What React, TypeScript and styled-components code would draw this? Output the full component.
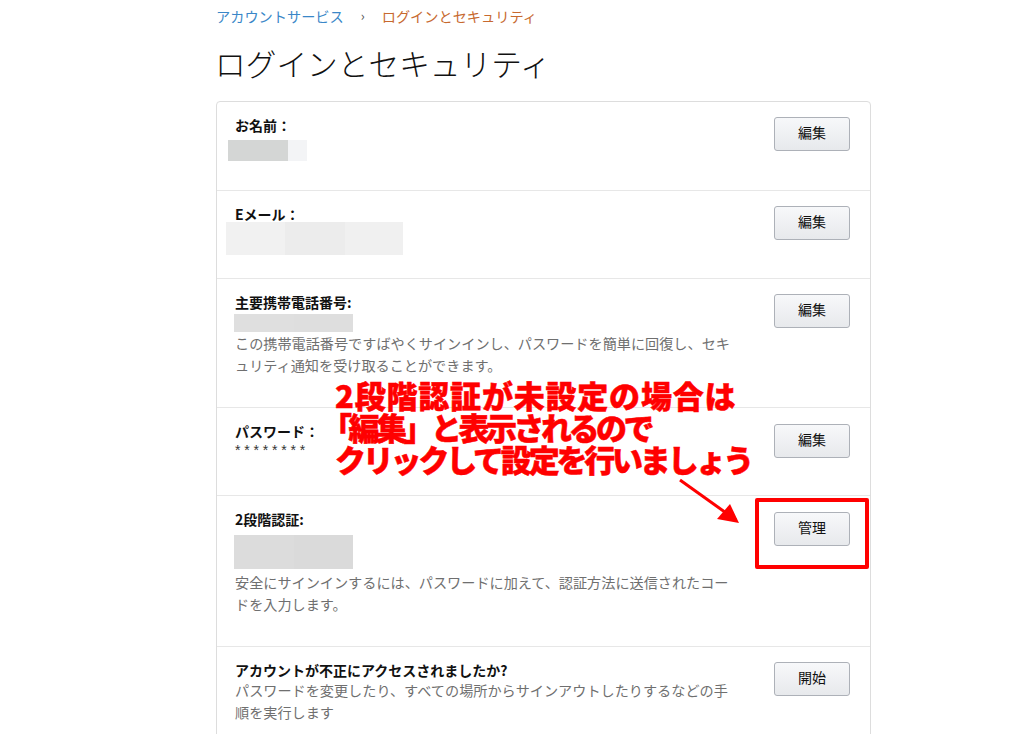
import React from 'react'
import styled, { createGlobalStyle } from 'styled-components'

const GlobalStyle = createGlobalStyle`
  html, body {
    margin: 0;
    padding: 0;
    background: #fff;
    overflow: hidden;
  }
  body {
    font-family: "Noto Sans CJK JP", "Noto Sans", sans-serif;
    color: #111;
  }
`

interface Patch {
  width: number
  color: string
}

interface RowData {
  label: React.ReactNode
  patches?: Patch[]
  patchHeight?: number
  patchInset?: number
  patchOffset?: number
  description?: string[]
  descriptionOffset?: number
  masked?: string
  action: string
  actionOffset?: number
  height: number
}

const rows: RowData[] = [
  {
    label: 'お名前：',
    patches: [
      { width: 60, color: '#d4d6d5' },
      { width: 19, color: '#f3f4f6' },
    ],
    patchHeight: 21,
    patchInset: 7,
    patchOffset: 5,
    action: '編集',
    height: 88,
  },
  {
    label: 'Eメール：',
    patches: [
      { width: 59, color: '#f1f1f1' },
      { width: 60, color: '#ececec' },
      { width: 58, color: '#f0f0f0' },
    ],
    patchHeight: 33,
    patchInset: 9,
    patchOffset: -2,
    action: '編集',
    height: 88,
  },
  {
    label: '主要携帯電話番号:',
    patches: [
      { width: 60, color: '#dfdfdf' },
      { width: 59, color: '#dedede' },
    ],
    patchHeight: 18,
    patchInset: 1,
    patchOffset: 2,
    description: [
      'この携帯電話番号ですばやくサインインし、パスワードを簡単に回復し、セキ',
      'ュリティ通知を受け取ることができます。',
    ],
    action: '編集',
    height: 129,
  },
  {
    label: 'パスワード：',
    masked: '********',
    action: '編集',
    actionOffset: 3,
    height: 88,
  },
  {
    label: '2段階認証:',
    patches: [
      { width: 60, color: '#dcdcdc' },
      { width: 59, color: '#dadada' },
    ],
    patchHeight: 34,
    patchInset: 1,
    patchOffset: 6,
    description: [
      '安全にサインインするには、パスワードに加えて、認証方法に送信されたコー',
      'ドを入力します。',
    ],
    descriptionOffset: 2,
    action: '管理',
    actionOffset: 3,
    height: 151,
  },
  {
    label: 'アカウントが不正にアクセスされましたか?',
    description: [
      'パスワードを変更したり、すべての場所からサインアウトしたりするなどの手',
      '順を実行します',
    ],
    descriptionOffset: -1,
    action: '開始',
    height: 110,
  },
]

const Page = styled.div`
  position: relative;
  width: 1024px;
  height: 734px;
  overflow: hidden;
  padding-left: 216px;
  box-sizing: border-box;
`

const Breadcrumb = styled.nav`
  display: flex;
  align-items: center;
  height: 18px;
  padding-top: 7px;
  font-size: 14.2px;
  line-height: 18px;
`

const CrumbLink = styled.span`
  color: #3a87c8;
`

const CrumbSeparator = styled.span`
  width: 38px;
  text-align: center;
  color: #555;
  font-size: 13px;
`

const CrumbCurrent = styled.span`
  color: #c7692f;
`

const Title = styled.h1`
  margin: 16px 0 0 -1px;
  font-size: 30.7px;
  font-weight: 300;
  line-height: 44px;
  color: #111;
`

const Card = styled.section`
  width: 655px;
  margin-top: 16px;
  box-sizing: border-box;
  border: 1px solid #ddd;
  border-radius: 4px 4px 0 0;
`

const Row = styled.div<{ $height: number }>`
  display: flex;
  justify-content: space-between;
  height: ${(p) => p.$height}px;
  box-sizing: border-box;
  padding: 13px 20px 0 19px;

  & + & {
    border-top: 1px solid #e7e7e7;
  }
`

const RowBody = styled.div`
  width: 520px;
`

const Label = styled.div`
  margin-left: -1px;
  font-size: 14px;
  font-weight: 700;
  line-height: 20px;
  color: #111;
`

const PatchStrip = styled.div<{ $inset: number; $height: number; $offset: number }>`
  display: flex;
  height: ${(p) => p.$height}px;
  margin: ${(p) => p.$offset}px 0 0 -${(p) => p.$inset + 1}px;
`

const PatchPiece = styled.div<{ $width: number; $color: string }>`
  width: ${(p) => p.$width}px;
  background: ${(p) => p.$color};
`

const DescriptionBlock = styled.div<{ $offset: number }>`
  margin: ${(p) => p.$offset}px 0 0 -1px;
`

const Description = styled.p`
  margin: 0;
  font-size: 14.15px;
  line-height: 22px;
  color: #6f6f6f;
  white-space: nowrap;
`

const Masked = styled.div`
  margin-left: -1px;
  font-family: "Liberation Sans", sans-serif;
  font-size: 14px;
  line-height: 18px;
  letter-spacing: 3.8px;
  color: #333;
`

const ActionButton = styled.button<{ $offset: number }>`
  width: 76px;
  height: 34px;
  margin-top: ${(p) => p.$offset}px;
  padding: 0 0 4px;
  box-sizing: border-box;
  border: 1px solid #adb1b8;
  border-radius: 3px;
  background: linear-gradient(to bottom, #f7f8fa, #e7e9ec);
  font-family: inherit;
  font-size: 14px;
  color: #111;
`

const Callout = styled.div`
  position: absolute;
  left: 335px;
  top: 379px;
  font-size: 31px;
  font-weight: 900;
  line-height: 32px;
  color: #f00;
  -webkit-text-stroke: 0.5px #f00;
  white-space: nowrap;
`

const CalloutLine = styled.div<{ $spacing: number; $shift?: number }>`
  margin-left: ${(p) => p.$shift ?? 0}px;
  letter-spacing: ${(p) => p.$spacing}px;
`

const Highlight = styled.div`
  position: absolute;
  left: 755px;
  top: 498px;
  width: 114px;
  height: 71px;
  box-sizing: border-box;
  border: 4px solid #f00;
  border-radius: 2px;
`

const ArrowMark = styled.svg`
  position: absolute;
  left: 675px;
  top: 474px;
`

export default function App() {
  return (
    <Page>
      <GlobalStyle />
      <Breadcrumb>
        <CrumbLink>アカウントサービス</CrumbLink>
        <CrumbSeparator>›</CrumbSeparator>
        <CrumbCurrent>ログインとセキュリティ</CrumbCurrent>
      </Breadcrumb>
      <Title>ログインとセキュリティ</Title>
      <Card>
        {rows.map((row, i) => (
          <Row key={i} $height={row.height}>
            <RowBody>
              <Label>{row.label}</Label>
              {row.patches && (
                <PatchStrip
                  $inset={row.patchInset ?? 0}
                  $height={row.patchHeight ?? 20}
                  $offset={row.patchOffset ?? 0}
                >
                  {row.patches.map((patch, j) => (
                    <PatchPiece key={j} $width={patch.width} $color={patch.color} />
                  ))}
                </PatchStrip>
              )}
              {row.masked && <Masked>{row.masked}</Masked>}
              {row.description && (
                <DescriptionBlock $offset={row.descriptionOffset ?? 0}>
                  {row.description.map((line) => (
                    <Description key={line}>{line}</Description>
                  ))}
                </DescriptionBlock>
              )}
            </RowBody>
            <ActionButton $offset={row.actionOffset ?? 2}>{row.action}</ActionButton>
          </Row>
        ))}
      </Card>
      <Callout>
        <CalloutLine $spacing={0.8}>2段階認証が未設定の場合は</CalloutLine>
        <CalloutLine $spacing={-3.5} $shift={-14}>
          「編集」と表示されるので
        </CalloutLine>
        <CalloutLine $spacing={-3.2}>クリックして設定を行いましょう</CalloutLine>
      </Callout>
      <ArrowMark width="70" height="56" viewBox="0 0 70 56">
        <path d="M5 6 L61 46" stroke="#f00" strokeWidth="3" fill="none" />
        <path d="M64 49 L42 45 L55 30 Z" fill="#f00" />
      </ArrowMark>
      <Highlight />
    </Page>
  )
}
